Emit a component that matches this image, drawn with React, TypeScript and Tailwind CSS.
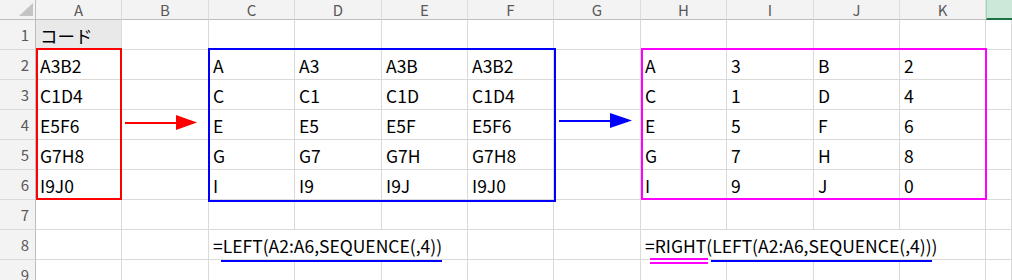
import React from 'react';

const COLS = ['A', 'B', 'C', 'D', 'E', 'F', 'G', 'H', 'I', 'J', 'K'];

// セルの値（行番号 → 列 → 値）
const DATA: Record<number, Record<string, string>> = {
  1: { A: 'コード' },
  2: { A: 'A3B2', C: 'A', D: 'A3', E: 'A3B', F: 'A3B2', H: 'A', I: '3', J: 'B', K: '2' },
  3: { A: 'C1D4', C: 'C', D: 'C1', E: 'C1D', F: 'C1D4', H: 'C', I: '1', J: 'D', K: '4' },
  4: { A: 'E5F6', C: 'E', D: 'E5', E: 'E5F', F: 'E5F6', H: 'E', I: '5', J: 'F', K: '6' },
  5: { A: 'G7H8', C: 'G', D: 'G7', E: 'G7H', F: 'G7H8', H: 'G', I: '7', J: 'H', K: '8' },
  6: { A: 'I9J0', C: 'I', D: 'I9', E: 'I9J', F: 'I9J0', H: 'I', I: '9', J: 'J', K: '0' },
};

const cellText = 'flex items-end pb-[3px] pl-[4px] leading-[20px] text-[17.5px] text-black whitespace-nowrap';

function Cell({ children, className = '' }: { children?: React.ReactNode; className?: string }) {
  return (
    <div className={`h-[30px] border-r border-b border-[#dadada] ${cellText} ${className}`}>
      {children}
    </div>
  );
}

function RowHead({ n }: { n: number }) {
  return (
    <div className="h-[30px] bg-[#f3f3f3] border-b border-b-[#dadada] border-r border-r-[#bdbdbd] flex items-center justify-end pr-[6px] text-[15px] leading-[18px] text-[#595959]">
      {n}
    </div>
  );
}

function Underline({ color, className = '' }: { color: string; className?: string }) {
  return <span className={`absolute h-[2px] ${color} ${className}`} />;
}

export default function App() {
  return (
    <div
      className="relative w-[1012px] h-[280px] overflow-hidden bg-white"
      style={{ fontFamily: '"Noto Sans CJK JP", "Noto Sans", sans-serif' }}
    >
      <div className="grid grid-cols-[36px_86px_87px_86px_87px_86px_86px_87px_86px_87px_86px_86px_1fr]">
        {/* 列見出し */}
        <div className="h-[20px] bg-[#f3f3f3] border-b border-b-[#bdbdbd] border-r border-r-[#bdbdbd]">
          <svg width="35" height="19" viewBox="0 0 35 19">
            <polygon points="33,3 33,16 19,16" fill="#c4c4c4" />
          </svg>
        </div>
        {COLS.map((c) => (
          <div
            key={c}
            className="h-[20px] bg-[#f3f3f3] border-b border-b-[#bdbdbd] border-r border-r-[#dcdcdc] flex items-center justify-center text-[15px] leading-[18px] text-[#595959]"
          >
            {c}
          </div>
        ))}
        <div className="h-[20px] bg-[#cbe9d8] border-b-2 border-b-[#1e7145] border-l border-l-[#9fd3b5]" />

        {/* 1〜7行目 */}
        {[1, 2, 3, 4, 5, 6, 7].map((r) => (
          <React.Fragment key={r}>
            <RowHead n={r} />
            {COLS.map((c) => (
              <Cell key={c} className={r === 1 && c === 'A' ? 'bg-[#e9e9e9]' : ''}>
                {DATA[r]?.[c]}
              </Cell>
            ))}
            <Cell />
          </React.Fragment>
        ))}

        {/* 8行目：数式 */}
        <RowHead n={8} />
        <Cell />
        <Cell />
        <Cell className="col-span-3">
          <span>=</span>
          <span className="relative">
            LEFT(A2:A6,SEQUENCE(,4))
            <Underline color="bg-[#0000ff]" className="left-[-2px] right-0 top-[24px]" />
          </span>
        </Cell>
        <Cell />
        <Cell />
        <Cell className="col-span-4">
          <span>=</span>
          <span className="relative">
            RIGHT
            <Underline color="bg-[#ff00ff]" className="left-[-5px] right-[-2px] top-[22px]" />
            <Underline color="bg-[#ff00ff]" className="left-[-5px] right-[-2px] top-[26px]" />
          </span>
          <span>(</span>
          <span className="relative">
            LEFT(A2:A6,SEQUENCE(,4))
            <Underline color="bg-[#0000ff]" className="left-[-1px] right-0 top-[24px]" />
          </span>
          <span>)</span>
        </Cell>
        <Cell />

        {/* 9行目 */}
        <RowHead n={9} />
        {COLS.map((c) => (
          <Cell key={c} />
        ))}
        <Cell />
      </div>

      {/* 範囲の枠 */}
      <div className="absolute left-[36px] top-[48px] w-[86px] h-[152px] border-2 border-[#ff0000]" />
      <div className="absolute left-[208px] top-[48px] w-[348px] h-[154px] border-2 border-[#0000ff]" />
      <div className="absolute left-[641px] top-[48px] w-[346px] h-[152px] border-2 border-[#ff00ff]" />

      {/* 矢印 */}
      <svg className="absolute left-[125px] top-[115px]" width="73" height="16" viewBox="0 0 73 16">
        <line x1="0" y1="8" x2="53" y2="8" stroke="#ff0000" strokeWidth="2" />
        <polygon points="51,0 72,7.5 51,15" fill="#ff0000" />
      </svg>
      <svg className="absolute left-[559px] top-[113px]" width="74" height="16" viewBox="0 0 74 16">
        <line x1="0" y1="8" x2="53" y2="8" stroke="#0000ff" strokeWidth="2" />
        <polygon points="51,0 73,7.5 51,15" fill="#0000ff" />
      </svg>
    </div>
  );
}
